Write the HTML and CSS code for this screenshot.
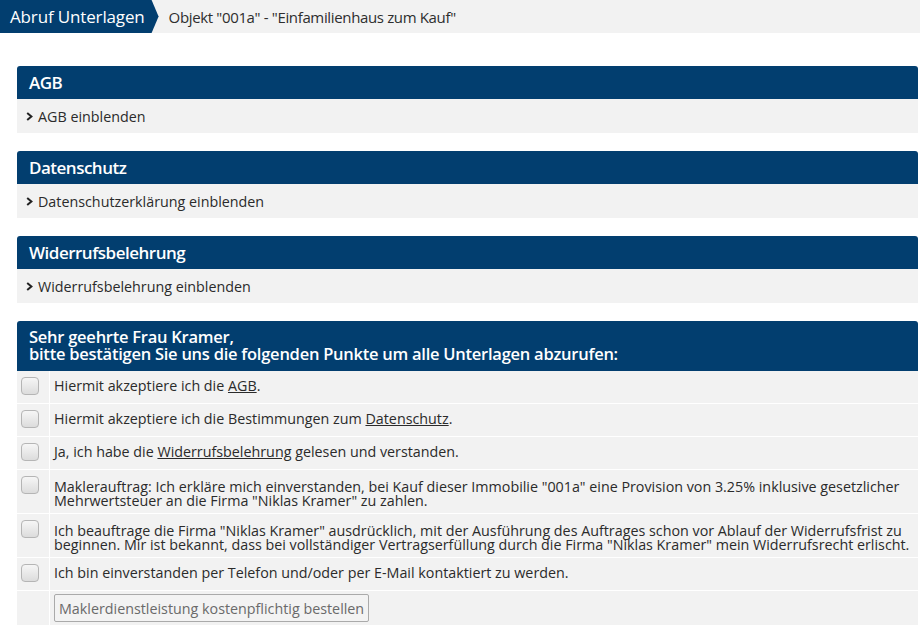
FILE: index.html
```html
<!DOCTYPE html>
<html lang="de">
<head>
<meta charset="utf-8">
<title>Abruf Unterlagen</title>
<link rel="stylesheet" href="styles.css">
</head>
<body>
<div class="crumbs">
  <div class="crumb-tab">Abruf Unterlagen</div>
  <div class="crumb-title">Objekt "001a" - "Einfamilienhaus zum Kauf"</div>
</div>

<div class="content">
  <section class="panel">
    <div class="panel-head">AGB</div>
    <div class="panel-body"><svg class="chev" width="7" height="9" viewBox="0 0 7 9"><polyline points="1.2,1 5.4,4.5 1.2,8" fill="none" stroke="#222" stroke-width="2"/></svg>AGB einblenden</div>
  </section>

  <section class="panel">
    <div class="panel-head">Datenschutz</div>
    <div class="panel-body"><svg class="chev" width="7" height="9" viewBox="0 0 7 9"><polyline points="1.2,1 5.4,4.5 1.2,8" fill="none" stroke="#222" stroke-width="2"/></svg>Datenschutzerklärung einblenden</div>
  </section>

  <section class="panel">
    <div class="panel-head">Widerrufsbelehrung</div>
    <div class="panel-body"><svg class="chev" width="7" height="9" viewBox="0 0 7 9"><polyline points="1.2,1 5.4,4.5 1.2,8" fill="none" stroke="#222" stroke-width="2"/></svg>Widerrufsbelehrung einblenden</div>
  </section>

  <section class="panel">
    <div class="panel-head two">Sehr geehrte Frau Kramer,<br>bitte bestätigen Sie uns die folgenden Punkte um alle Unterlagen abzurufen:</div>
    <div class="row"><div class="cb-cell"><span class="cb"></span></div><div class="txt">Hiermit akzeptiere ich die <u>AGB</u>.</div></div>
    <div class="row"><div class="cb-cell"><span class="cb"></span></div><div class="txt">Hiermit akzeptiere ich die Bestimmungen zum <u>Datenschutz</u>.</div></div>
    <div class="row"><div class="cb-cell"><span class="cb"></span></div><div class="txt">Ja, ich habe die <u>Widerrufsbelehrung</u> gelesen und verstanden.</div></div>
    <div class="row tall"><div class="cb-cell"><span class="cb"></span></div><div class="txt">Maklerauftrag: Ich erkläre mich einverstanden, bei Kauf dieser Immobilie "001a" eine Provision von 3.25% inklusive gesetzlicher<br>Mehrwertsteuer an die Firma "Niklas Kramer" zu zahlen.</div></div>
    <div class="row tall"><div class="cb-cell"><span class="cb"></span></div><div class="txt">Ich beauftrage die Firma "Niklas Kramer" ausdrücklich, mit der Ausführung des Auftrages schon vor Ablauf der Widerrufsfrist zu<br>beginnen. Mir ist bekannt, dass bei vollständiger Vertragserfüllung durch die Firma "Niklas Kramer" mein Widerrufsrecht erlischt.</div></div>
    <div class="row"><div class="cb-cell"><span class="cb"></span></div><div class="txt">Ich bin einverstanden per Telefon und/oder per E-Mail kontaktiert zu werden.</div></div>
    <div class="row btn-row"><div class="cb-cell"></div><div class="txt"><button class="btn" type="button">Maklerdienstleistung kostenpflichtig bestellen</button></div></div>
  </section>
</div>
</body>
</html>
```

FILE: styles.css
```css
html, body {
  margin: 0;
  padding: 0;
  background: #ffffff;
}
body {
  font-family: "Open Sans", "DejaVu Sans", sans-serif;
  color: #2b2b2b;
  font-size: 14.3px;
}
.crumbs {
  display: flex;
  align-items: stretch;
  height: 33px;
  background: #f2f2f2;
}
.crumb-tab {
  background: #023e6f;
  color: #ffffff;
  font-size: 17px;
  letter-spacing: -0.15px;
  display: flex;
  align-items: center;
  padding: 0 14px 0 10px;
  clip-path: polygon(0 0, calc(100% - 7px) 0, 100% 50%, calc(100% - 7px) 100%, 0 100%);
}
.crumb-title {
  display: flex;
  align-items: center;
  padding-left: 10px;
  font-size: 15px;
  letter-spacing: -0.35px;
  color: #2e2e2e;
}
.content {
  padding: 33px 2px 0 17px;
  display: flex;
  flex-direction: column;
  gap: 18px;
}
.panel {
  display: flex;
  flex-direction: column;
}
.panel-head {
  background: #023e6f;
  color: #ffffff;
  font-weight: 600;
  font-size: 17px;
  letter-spacing: -0.5px;
  height: 33px;
  display: flex;
  align-items: center;
  padding-left: 12px;
  border-radius: 3px 3px 0 0;
}
.panel-head.two {
  display: block;
  height: auto;
  padding: 7px 12px 9px 12px;
  font-size: 16.5px;
  letter-spacing: -0.25px;
  line-height: 17px;
}
.panel-body {
  background: #f2f2f2;
  height: 34px;
  display: flex;
  align-items: center;
  padding-left: 9px;
}
.chev {
  flex: none;
  margin-right: 5px;
  position: relative;
  top: 0.5px;
}
.row {
  display: flex;
  background: #f2f2f2;
  border-bottom: 1px solid #ffffff;
  min-height: 32px;
}
.row.tall {
  min-height: 43px;
}
.cb-cell {
  width: 33px;
  flex: none;
  border-right: 1px solid #ffffff;
  display: flex;
  align-items: flex-start;
  justify-content: flex-start;
  padding: 6px 0 0 4px;
  box-sizing: border-box;
}
.cb {
  width: 18px;
  height: 18px;
  box-sizing: border-box;
  border: 1px solid #b5b5b5;
  border-radius: 4px;
  background: linear-gradient(#f6f6f6, #dcdcdc);
}
.txt {
  padding: 8px 4px 0 4px;
  line-height: 14px;
}
.row.tall .txt {
  padding-top: 10px;
}
.btn-row {
  min-height: 35px;
  border-bottom: none;
}
.btn-row .txt {
  padding-top: 3px;
}
.btn {
  font-family: "Open Sans", "DejaVu Sans", sans-serif;
  font-size: 14.3px;
  color: #6a6a6a;
  background: #f3f3f3;
  border: 1px solid #aaaaaa;
  border-radius: 2px;
  height: 28px;
  padding: 0 4px 0 4px;
}
```
